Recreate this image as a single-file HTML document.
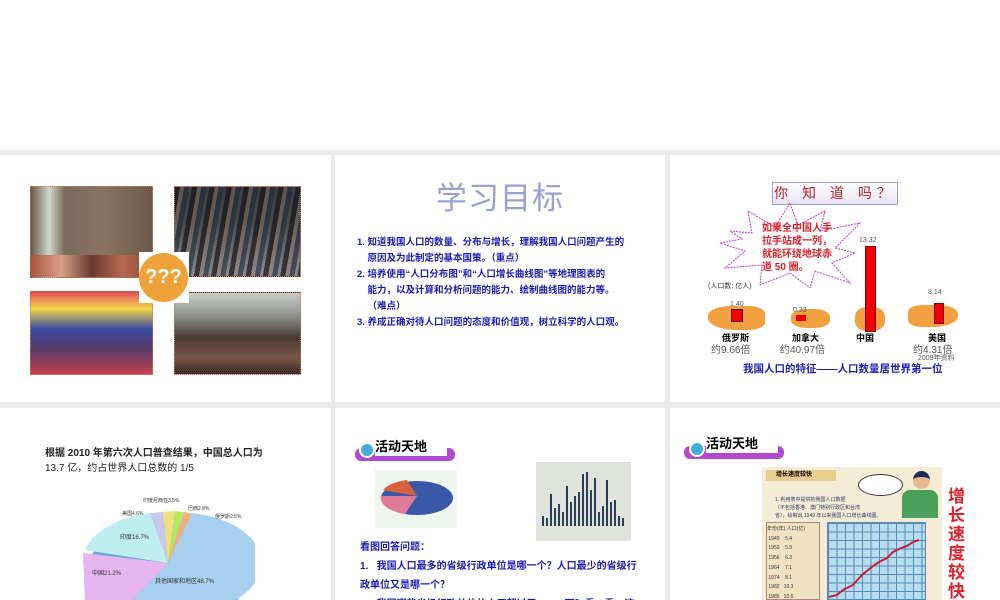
<!DOCTYPE html>
<html><head><meta charset="utf-8"><style>
*{margin:0;padding:0;box-sizing:border-box}
body{width:1000px;height:600px;overflow:hidden;background:#ebebeb;position:relative;font-family:"Liberation Sans","Noto Sans CJK SC",sans-serif}
.a{position:absolute}
.s{position:absolute;background:#fff;overflow:hidden}
.ph{position:absolute;border:1px dotted #c9764f}
.blue{color:#1b1bb0;font-weight:bold}
</style></head><body>
<div class="a" style="left:0;top:0;width:1000px;height:150px;background:#fff"></div>

<!-- slide1 -->
<div class="s" style="left:0;top:155px;width:331px;height:247px">
 <div class="ph" style="left:30px;top:31px;width:123px;height:92px;background:linear-gradient(90deg,#6b5a4a 0%,#cfd6cf 15%,#7b6a5a 28%,#8a7260 60%,#6e5a48 100%)">
  <div class="a" style="left:0;bottom:0;width:100%;height:22px;background:linear-gradient(90deg,#a8553f,#d9a085,#6a3a30,#b66a50,#8a4a38)"></div></div>
 <div class="ph" style="left:174px;top:31px;width:127px;height:91px;background:linear-gradient(180deg,#3a3c40 0%,#4a4848 40%,#6a6a6e 70%,#8a8a90 100%)">
  <div class="a" style="left:0;top:0;width:100%;height:100%;background:repeating-linear-gradient(100deg,rgba(20,20,25,.7) 0 5px,rgba(160,130,110,.35) 5px 9px,rgba(30,40,55,.6) 9px 14px,transparent 14px 17px)"></div></div>
 <div class="ph" style="left:30px;top:136px;width:123px;height:84px;background:linear-gradient(180deg,#e24b5a 0%,#f4d64a 20%,#3a4aa0 45%,#5a3b6a 70%,#c24050 100%)"></div>
 <div class="ph" style="left:174px;top:137px;width:127px;height:83px;background:linear-gradient(180deg,#c8ccc8 0%,#8a8c88 30%,#4a3a34 55%,#7a5548 80%,#3a2a26 100%)"></div>
 <div class="a" style="left:139px;top:97px;width:50px;height:51px;background:#fff"></div>
 <div class="a" style="left:139px;top:98px;width:49px;height:49px;border-radius:50%;background:#f0a23a;color:#fff;font-weight:bold;font-size:20px;text-align:center;line-height:49px">???</div>
</div>

<!-- slide2 -->
<div class="s" style="left:335px;top:155px;width:330px;height:247px">
 <div class="a" style="left:0;top:18px;width:330px;text-align:center;font-size:31px;color:#9a9fcf;letter-spacing:1px">学习目标</div>
 <div class="a blue" style="left:22px;top:80px;width:300px;font-size:9.5px;line-height:16px">
  1. 知道我国人口的数量、分布与增长，理解我国人口问题产生的<br>&nbsp;&nbsp;&nbsp;&nbsp;原因及为此制定的基本国策。（重点）<br>
  2. 培养使用“人口分布图”和“人口增长曲线图”等地理图表的<br>&nbsp;&nbsp;&nbsp;&nbsp;能力，以及计算和分析问题的能力、绘制曲线图的能力等。<br>&nbsp;&nbsp;&nbsp;&nbsp;（难点）<br>
  3. 养成正确对待人口问题的态度和价值观，树立科学的人口观。</div>
</div>

<!-- slide3 -->
<div class="s" style="left:670px;top:155px;width:330px;height:247px">
 <div class="a" style="left:102px;top:27px;width:126px;height:23px;background:linear-gradient(#fff,#e8e4f4);border:1px solid #a89ad0;color:#c0202a;font-size:14px;text-align:center;line-height:21px;letter-spacing:5px">你 知 道 吗？</div>
 <svg class="a" style="left:50px;top:48px" width="160" height="85" viewBox="0 0 160 85">
  <polygon points="10,28 32,30 28,8 55,24 70,0 78,22 105,8 100,28 140,20 115,45 135,50 112,60 130,80 95,68 90,85 70,70 40,82 42,62 5,65 25,48 0,40 22,36" fill="#fff" stroke="#c03ad0" stroke-width="1" stroke-dasharray="2,1"/>
 </svg>
 <div class="a" style="left:92px;top:67px;font-size:10px;line-height:13px;color:#e0202a;font-weight:bold">如果全中国人手<br>拉手站成一列，<br>就能环绕地球赤<br>道 50 圈。</div>
 <div class="a" style="left:38px;top:126px;font-size:7px;color:#333">(人口数: 亿人)</div>
 <div class="a" style="left:38px;top:151px;width:57px;height:24px;background:#f2a040;border-radius:40% 30% 30% 50%"></div>
 <div class="a" style="left:61px;top:154px;width:12px;height:13px;background:#e00;border:1px solid #600"></div>
 <div class="a" style="left:60px;top:146px;font-size:7px;color:#555">1.40</div>
 <div class="a" style="left:121px;top:154px;width:39px;height:19px;background:#f2a040;border-radius:40%"></div>
 <div class="a" style="left:126px;top:160px;width:10px;height:6px;background:#e00"></div>
 <div class="a" style="left:123px;top:152px;font-size:7px;color:#555">0.33</div>
 <div class="a" style="left:185px;top:152px;width:30px;height:24px;background:#f2a040;border-radius:40%"></div>
 <div class="a" style="left:195px;top:91px;width:11px;height:86px;background:#e00;border:1px solid #800"></div>
 <div class="a" style="left:189px;top:82px;font-size:7px;color:#555">13.32</div>
 <div class="a" style="left:238px;top:150px;width:50px;height:22px;background:#f2a040;border-radius:30% 40% 50% 30%"></div>
 <div class="a" style="left:264px;top:148px;width:10px;height:21px;background:#e00;border:1px solid #800"></div>
 <div class="a" style="left:258px;top:134px;font-size:7px;color:#555">3.14</div>
 <div class="a" style="left:52px;top:176px;font-size:9px;font-weight:bold">俄罗斯</div>
 <div class="a" style="left:122px;top:176px;font-size:9px;font-weight:bold">加拿大</div>
 <div class="a" style="left:186px;top:176px;font-size:9px;font-weight:bold">中国</div>
 <div class="a" style="left:258px;top:176px;font-size:9px;font-weight:bold">美国</div>
 <div class="a" style="left:41px;top:186px;font-size:10px;color:#555">约9.66倍</div>
 <div class="a" style="left:110px;top:186px;font-size:10px;color:#555">约40.97倍</div>
 <div class="a" style="left:243px;top:186px;font-size:10px;color:#555">约4.31倍</div>
 <div class="a" style="left:248px;top:198px;font-size:7px;color:#555">2009年资料</div>
 <div class="a blue" style="left:73px;top:206px;font-size:10.5px;color:#2020b0">我国人口的特征——人口数量居世界第一位</div>
</div>

<!-- slide4 -->
<div class="s" style="left:0;top:408px;width:331px;height:192px">
 <div class="a" style="left:45px;top:38px;font-size:10px;line-height:15px;color:#222;font-weight:bold">根据 2010 年第六次人口普查结果，中国总人口为<br><span style="font-weight:normal">13.7 亿，约占世界人口总数的 1/5</span></div>
 <svg class="a" style="left:80px;top:75px" width="175" height="120" viewBox="0 0 175 120">
  <ellipse cx="88" cy="90" rx="82" ry="50" fill="#6aa8d8"/>
  <path d="M88,80 L110,30 A82,50 0 0 1 88,130 L40,130 Z" fill="#a6d0ee"/>
  <path d="M88,80 L40,130 L5,118 L3,70 Z" fill="#e6b4ee"/>
  <path d="M88,80 L5,67 A85,50 0 0 1 70,30 Z" fill="#bfeeef"/>
  <path d="M88,80 L70,30 L83,29 Z" fill="#c8c8ee"/>
  <path d="M88,80 L83,29 L95,28 Z" fill="#eee080"/>
  <path d="M88,80 L95,28 L104,29 Z" fill="#b0e860"/>
  <path d="M88,80 L104,29 L112,31 Z" fill="#eeb080"/>
  <text x="75" y="100" font-size="6" fill="#333">其他国家和地区48.7%</text>
  <text x="12" y="92" font-size="6" fill="#333">中国21.2%</text>
  <text x="40" y="56" font-size="6" fill="#333">印度16.7%</text>
  <text x="42" y="32" font-size="5" fill="#333">美国4.6%</text>
  <text x="63" y="19" font-size="5" fill="#333">印度尼西亚3.5%</text>
  <text x="108" y="27" font-size="5" fill="#333">巴西2.8%</text>
  <text x="135" y="35" font-size="5" fill="#333">俄罗斯2.5%</text>
 </svg>
</div>

<!-- slide5 -->
<div class="s" style="left:335px;top:408px;width:330px;height:192px">
 <div class="a" style="left:20px;top:40px;width:100px;height:13px;border-radius:6px;background:#b04ad0"></div>
 <div class="a" style="left:40px;top:29px;width:72px;height:19px;background:#fff;font-size:13px;font-weight:bold;line-height:19px">活动天地</div>
 <div class="a" style="left:24px;top:34px;width:16px;height:16px;border-radius:50%;background:#40b0d8;border:2px solid #fff"></div>
 <div class="a" style="left:40px;top:62px;width:82px;height:58px;background:#eef4ee"></div>
 <svg class="a" style="left:42px;top:66px" width="78" height="46"><ellipse cx="40" cy="24" rx="36" ry="17" fill="#3a58a8"/><path d="M40,22 L4,22 A36,17 0 0 0 28,40 Z" fill="#e07a9a"/><path d="M40,22 L6,16 A36,17 0 0 1 30,6 Z" fill="#d8603a"/></svg>
 <div class="a" style="left:201px;top:54px;width:95px;height:79px;background:#dfe3dc"></div>
 <svg class="a" style="left:205px;top:58px" width="88" height="62"><g fill="#2e3e56"><rect x="2" y="50" width="2" height="10"/><rect x="6" y="52" width="2" height="8"/><rect x="10" y="28" width="2" height="32"/><rect x="14" y="42" width="2" height="18"/><rect x="18" y="38" width="2" height="22"/><rect x="22" y="46" width="2" height="14"/><rect x="26" y="20" width="2" height="40"/><rect x="30" y="36" width="2" height="24"/><rect x="34" y="30" width="2" height="30"/><rect x="38" y="26" width="2" height="34"/><rect x="42" y="8" width="2" height="52"/><rect x="46" y="6" width="2" height="54"/><rect x="50" y="24" width="2" height="36"/><rect x="54" y="12" width="2" height="48"/><rect x="58" y="46" width="2" height="14"/><rect x="62" y="40" width="2" height="20"/><rect x="66" y="14" width="2" height="46"/><rect x="70" y="36" width="2" height="24"/><rect x="74" y="34" width="2" height="26"/><rect x="78" y="50" width="2" height="10"/><rect x="82" y="52" width="2" height="8"/></g></svg>
 <div class="a blue" style="left:25px;top:130px;font-size:10px;line-height:19px;width:300px">看图回答问题：<br>1.&nbsp;&nbsp; 我国人口最多的省级行政单位是哪一个？人口最少的省级行<br>政单位又是哪一个？<br>2.&nbsp;&nbsp; 我国哪些省级行政单位的人口超过了 5000 万？看一看，这</div>
</div>

<!-- slide6 -->
<div class="s" style="left:670px;top:408px;width:330px;height:192px">
 <div class="a" style="left:14px;top:38px;width:100px;height:13px;border-radius:6px;background:#b04ad0"></div>
 <div class="a" style="left:36px;top:26px;width:72px;height:19px;background:#fff;font-size:13px;font-weight:bold;line-height:19px">活动天地</div>
 <div class="a" style="left:19px;top:33px;width:16px;height:16px;border-radius:50%;background:#40b0d8;border:2px solid #fff"></div>
 <div class="a" style="left:92px;top:59px;width:180px;height:133px;background:#f4ecd4"></div>
 <div class="a" style="left:96px;top:62px;width:70px;height:11px;background:#e8cc90;font-size:6px;font-weight:bold;padding-left:10px;line-height:11px">增长速度较快</div>
 <div class="a" style="left:105px;top:88px;font-size:5px;color:#336;line-height:8px;width:110px">1. 利用表中提供的我国人口数据<br>（不包括香港、澳门特别行政区和台湾<br>省），绘制出 1949 年以来我国人口增长曲线图。</div>
 <div class="a" style="left:188px;top:66px;width:45px;height:22px;border:1px solid #333;border-radius:50%;background:#fff"></div>
 <div class="a" style="left:243px;top:63px;width:17px;height:18px;border-radius:50%;background:#e8b890;border-top:6px solid #1a2e5a"></div>
 <div class="a" style="left:232px;top:82px;width:36px;height:28px;background:#4aa05a;border-radius:8px 8px 0 0"></div>
 <div class="a" style="left:96px;top:114px;width:54px;height:78px;background:#f0e2c0;border:1px solid #a88"></div>
 <div class="a" style="left:97px;top:117px;font-size:5px;line-height:9.7px;color:#333">年份(年) 人口(亿)<br>&nbsp;1949&nbsp;&nbsp;&nbsp;&nbsp;5.4<br>&nbsp;1953&nbsp;&nbsp;&nbsp;&nbsp;5.9<br>&nbsp;1956&nbsp;&nbsp;&nbsp;&nbsp;6.3<br>&nbsp;1964&nbsp;&nbsp;&nbsp;&nbsp;7.1<br>&nbsp;1974&nbsp;&nbsp;&nbsp;&nbsp;8.1<br>&nbsp;1982&nbsp;&nbsp;&nbsp;10.3<br>&nbsp;1985&nbsp;&nbsp;&nbsp;10.6<br>&nbsp;1990&nbsp;&nbsp;&nbsp;11.4</div>
 <div class="a" style="left:157px;top:114px;width:99px;height:78px;background-color:#b8dcf0;background-image:linear-gradient(#5a8ab8 1px,transparent 1px),linear-gradient(90deg,#5a8ab8 1px,transparent 1px);background-size:8.5px 8.5px;border:1px solid #5a8ab8"></div>
 <svg class="a" style="left:157px;top:114px" width="99" height="78"><polyline points="2,75 10,73 16,68 26,63 35,53 46,44 52,40 60,36 66,30 74,26 80,24 86,20 92,18" fill="none" stroke="#c02030" stroke-width="2"/></svg>
 <div class="a" style="left:278px;top:79px;width:20px;font-size:17px;line-height:19px;color:#e0202a;font-weight:bold">增长速度较快</div>
</div>
</body></html>
